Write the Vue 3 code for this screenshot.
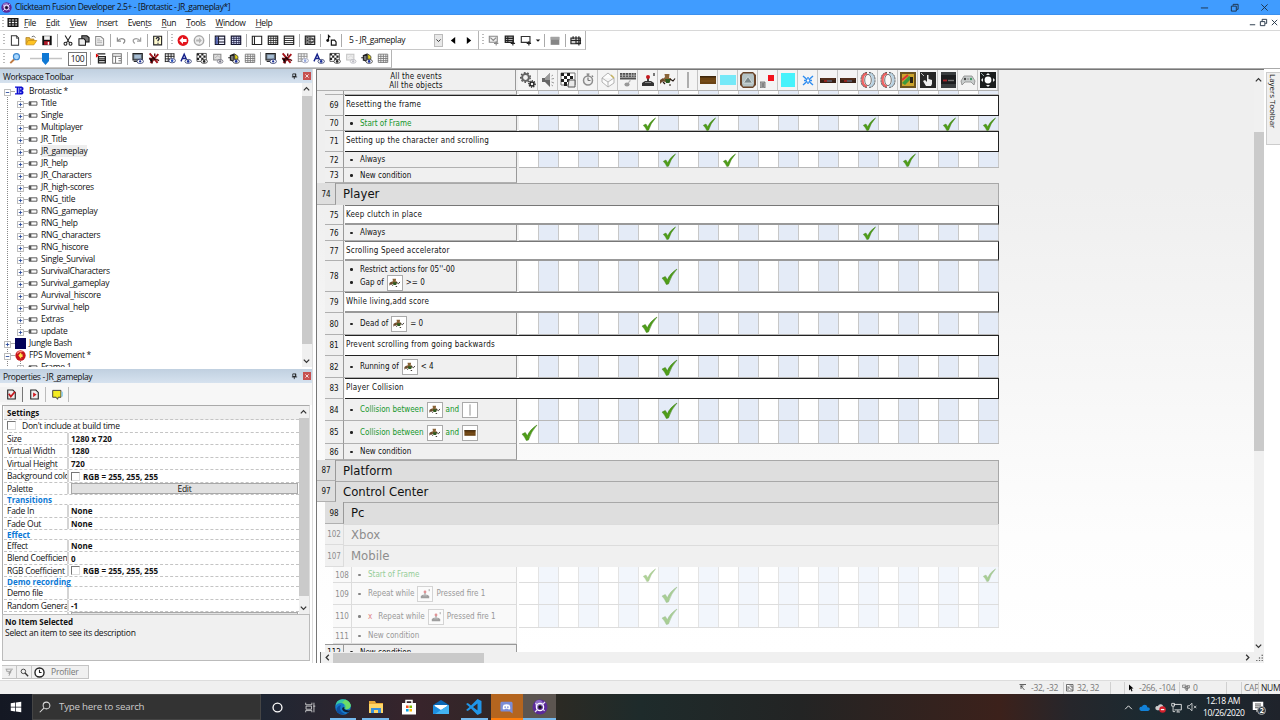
<script setup>
const icons = {
  logo: '<circle cx="8" cy="8" r="7.5" fill="#5b2a9a"/><circle cx="7" cy="5" r="4" fill="#a48ad8" opacity=".7"/><circle cx="8" cy="8" r="3.6" fill="none" stroke="#fff" stroke-width="1.3"/><circle cx="8" cy="8" r="1.8" fill="#111"/><path d="M3 13L6 10M13 3L10 6M12.500 12L11 10M3.500 4L5 6" stroke="#e6dcf6" stroke-width="1.200"/>',
  table: '<path d="M1 2.500H15V13.500H1Z" fill="#fff" stroke="#111" stroke-width="2"/><path d="M1 6H15M1 10H15M5.500 2V14M10.500 2V14" stroke="#111" stroke-width="1.500"/>',
  newf: '<path d="M3 1.500H10L13 4.500V14.500H3Z" fill="#fff" stroke="#333" stroke-width="1.400"/><path d="M10 1.500V5H13" fill="none" stroke="#333"/>',
  open: '<path d="M1 13V4H6L7 6H12V8" fill="#e9b93c" stroke="#a87410"/><path d="M1 14L4 8H16L12 14Z" fill="#ffc423" stroke="#c58a10"/><path d="M9 3Q12 0 14 4" stroke="#333" fill="none"/>',
  save: '<path d="M1.500 1.500H14.500V14.500H1.500Z" fill="#111"/><path d="M4 2H12V7H4Z" fill="#f2f2f2"/><path d="M4 9H12V14H4Z" fill="#b51c2a"/><path d="M9 10H11V14H9Z" fill="#fff"/>',
  cut: '<path d="M4 1L10 11M12 1L6 11" stroke="#222" stroke-width="1.500"/><circle cx="4.500" cy="12.500" r="2" fill="none" stroke="#222" stroke-width="1.500"/><circle cx="11.500" cy="12.500" r="2" fill="none" stroke="#222" stroke-width="1.500"/>',
  copy: '<path d="M5 1.500H12L15 4V10H5Z" fill="#777" stroke="#111" stroke-width="1.400"/><path d="M1 5.500H8L10 8V14.500H1Z" fill="#eee" stroke="#111" stroke-width="1.400"/>',
  paste: '<path d="M2 2.500H9L13 6V14.500H2Z" fill="#f4f4f4" stroke="#8a8a8a" stroke-width="1.400"/><path d="M4 6H8M4 8.500H11M4 11H11" stroke="#999"/>',
  undo: '<path d="M3 4V9H8M3 9Q8 3 13 7Q14 10 11 12" fill="none" stroke="#8d8d8d" stroke-width="1.700"/>',
  redo: '<path d="M13 4V9H8M13 9Q8 3 3 7Q2 10 5 12" fill="none" stroke="#a0a0a0" stroke-width="1.700"/>',
  help: '<path d="M2 2H13V14H2Z" fill="#fffbd0" stroke="#222" stroke-width="1.500"/><path d="M5.500 6Q6 3.500 8.500 4Q11 5 8 8V9M8 11V12.500" fill="none" stroke="#223" stroke-width="1.800"/>',
  back: '<circle cx="8" cy="8" r="7.500" fill="#e3141c"/><path d="M8 3L3 8L8 13V10H13V6H8Z" fill="#fff"/>',
  fwd: '<circle cx="8" cy="8" r="6.500" fill="#f0f0f0" stroke="#a8a8a8" stroke-width="2"/><path d="M8 4L12 8L8 12V9.500H4V6.500H8Z" fill="#b4b4b4"/>',
  story: '<path d="M1.500 2H14.500V13.500H1.500Z" fill="#f0f2ff" stroke="#16162a" stroke-width="1.600"/><path d="M1 6H15M1 10H15M6 2V14" stroke="#16162a" stroke-width="1.400"/><path d="M2 3H5V13H2Z" fill="#5464b0"/>',
  grid: '<path d="M1.500 2H14.500V13.500H1.500Z" fill="#dfe5ff" stroke="#14142c" stroke-width="1.600"/><path d="M1 5H15M1 8H15M1 11H15M5 2V14M8.500 2V14M12 2V14" stroke="#1d1d44" stroke-width="1.100"/>',
  frame: '<path d="M1.500 2H14.500V13.500H1.500Z" fill="#fff" stroke="#222" stroke-width="1.500"/><path d="M4.500 2V14" stroke="#222" stroke-width="1.500"/>',
  gridb: '<path d="M1.500 2H14.500V13.500H1.500Z" fill="#fff" stroke="#222" stroke-width="1.600"/><path d="M1 5H15M1 8H15M1 11H15M5 2V14M8.500 2V14M12 2V14" stroke="#222" stroke-width="1.100"/>',
  lines: '<path d="M1.500 2H14.500V13.500H1.500Z" fill="#fff" stroke="#222" stroke-width="1.600"/><path d="M1 5H15M1 8H15M1 11H15" stroke="#222" stroke-width="1.300"/>',
  data: '<path d="M1.500 2H14.500V13.500H1.500Z" fill="#ddd" stroke="#222" stroke-width="1.600"/><path d="M1 6H15M1 10H15M8 2V14M3 4H6M10 4L13 8M9 12L13 9M3 8H6M3 12H6" stroke="#222" stroke-width="1.300"/>',
  music: '<path d="M4.500 8V1L7 3.500" fill="none" stroke="#111" stroke-width="1.600"/><circle cx="3.500" cy="8" r="2" fill="#111"/><path d="M8.500 7.500H13L15 10V14.500H8.500Z" fill="#fff" stroke="#111" stroke-width="1.600"/>',
  prev: '<path d="M11 3V13L5 8Z" fill="#000"/>',
  next: '<path d="M5 3V13L11 8Z" fill="#000"/>',
  sideg: '<path d="M1.500 2H12.500V10.500H1.500Z" fill="#eee" stroke="#888" stroke-width="1.500"/><path d="M3 4L7 8L11 4M11 9V15M14 12H8" stroke="#888" stroke-width="1.500" fill="none"/>',
  sideb: '<path d="M1.500 2H12.500V10.500H1.500Z" fill="#bbb" stroke="#222" stroke-width="1.800"/><path d="M1 5H13M1 8H13M5 2V11M12 9V15M15 12H9" stroke="#222" stroke-width="1.500"/>',
  framep: '<path d="M1.500 2.500H13.500V10.500H1.500Z" fill="#fff" stroke="#333" stroke-width="1.600"/><path d="M12 9V15M15 12H9" stroke="#222" stroke-width="1.600"/>',
  drop: '<path d="M3 6H13L8 11Z" fill="#111"/>',
  stop: '<path d="M2 3H14V14H2Z" fill="#858585"/><path d="M2 3H14V7H2Z" fill="#a3a3a3"/>',
  event: '<path d="M1 4.500H14V12.500H1Z" fill="#ccc" stroke="#222" stroke-width="1.600"/><path d="M1 8H15M4 2V6M8 2V13M12 2V15M15 12H9" stroke="#222" stroke-width="1.600"/>',
  zoom: '<path d="M7 9L1.500 14.500" stroke="#c07a42" stroke-width="2.600"/><circle cx="10" cy="5.500" r="4.200" fill="#a8d8ff" stroke="#3b86d0" stroke-width="1.600"/>',
  ins: '<path d="M3 1.500H14M4.500 5.500H14V14H4.500ZM5 8.500H14M5 11H14" fill="none" stroke="#222" stroke-width="1.800"/><path d="M1 1V7L5 4Z" fill="#d00"/>',
  insg: '<path d="M2 1.500H14V14.500H2ZM2 5H14M6 5V14M10 8H14M10 11H14" fill="none" stroke="#777" stroke-width="1.400"/>',
  mon: '<path d="M1 1H14V10H1Z" fill="#6c7884" stroke="#222" stroke-width="1.400"/><path d="M3 3H12V8H3Z" fill="#a6bdd3"/><path d="M2 12H7" stroke="#222" stroke-width="1.600"/><ellipse cx="11" cy="12" rx="4.500" ry="3" fill="#fff" stroke="#14205a"/><circle cx="11" cy="12" r="1.600" fill="#1a2f9a"/>',
  redx: '<path d="M2 1L13 14M14 2L3 14" stroke="#a5141a" stroke-width="2.600"/><path d="M1 8H7L5 15M11 9L15 11M9 1V5" stroke="#5c0d12" stroke-width="2"/><path d="M6 6L10 10" stroke="#220508" stroke-width="2.400"/>',
  eyeg: '<path d="M1 1.500H14M1 5H14M1 8.500H8M1 12H6M1.500 1V13M5.500 1V13M9.500 1V8M13.500 1V8" stroke="#222" stroke-width="1.300"/><ellipse cx="11" cy="11" rx="4.500" ry="3" fill="#fff" stroke="#14205a"/><circle cx="11" cy="11" r="1.800" fill="#2a52c0"/>',
  aeye: '<path d="M1 12L5.500 2L9 10M3 8H8" stroke="#14208a" stroke-width="1.900" fill="none"/><ellipse cx="11" cy="12" rx="4.500" ry="2.800" fill="#fff" stroke="#14205a"/><circle cx="11" cy="12" r="1.800" fill="#1a2f9a"/>',
  cheye: '<path d="M1 1H14V12H1Z" fill="#fff" stroke="#222"/><path d="M1 1H4V4H1ZM7 1H10V4H7ZM4 4H7V7H4ZM10 4H13V7H10ZM1 7H4V10H1ZM7 7H10V10H7Z" fill="#222"/><ellipse cx="11" cy="12" rx="4.500" ry="2.800" fill="#fff" stroke="#222"/><circle cx="11" cy="12" r="1.800" fill="#222"/>',
  geye: '<path d="M2 2H12V10H2Z" fill="#ddd" stroke="#888" stroke-width="1.400"/><path d="M4 7L8 4L11 7" stroke="#aaa" fill="none"/><ellipse cx="11" cy="12" rx="4" ry="2.600" fill="#eee" stroke="#667"/><circle cx="11" cy="12" r="1.600" fill="#778"/>',
  yeye: '<path d="M0 7H3M3 3V11M3 4L8 2V12L3 10" fill="#777" stroke="#222" stroke-width="1.600"/><path d="M9 2Q15 4 13 9H9Z" fill="#e2d31a" stroke="#222"/><ellipse cx="11" cy="12" rx="4.500" ry="2.800" fill="#fff" stroke="#222"/><circle cx="11" cy="12" r="1.800" fill="#1a2f9a"/>',
  gridg: '<path d="M1.500 2H14.500V13.500H1.500ZM1 5H15M1 8H15M1 11H15M5 2V14M8.500 2V14M12 2V14" fill="none" stroke="#777" stroke-width="1.200"/>',
  gear: '<circle cx="5.500" cy="5.500" r="3.400" fill="none" stroke="#666" stroke-width="2"/><circle cx="5.500" cy="5.500" r="4.800" fill="none" stroke="#555" stroke-width="1.400" stroke-dasharray="1.700 1.700"/><circle cx="12" cy="12" r="2" fill="none" stroke="#222" stroke-width="1.500"/><circle cx="12" cy="12" r="3.200" fill="none" stroke="#222" stroke-width="1.200" stroke-dasharray="1.200 1.200"/>',
  speaker: '<path d="M2 6H5L10 1V15L5 10H2Z" fill="#666"/><path d="M5 6L10 1V8H5Z" fill="#9a9a9a"/><path d="M11.500 4L13 3M11.500 7L14 6.500M11.500 10L14 11M11.500 13L13 14" stroke="#999" stroke-width="1"/>',
  checker: '<path d="M1 1H15V13H1Z" fill="#fff" stroke="#777"/><path d="M1 1H4V4H1ZM7 1H10V4H7ZM4 4H7V7H4ZM10 4H13V7H10ZM1 7H4V10H1ZM7 7H10V10H7ZM4 10H7V14H4Z" fill="#222"/><path d="M9 8H15V15H8Z" fill="#e9e9e9" stroke="#555"/>',
  clock: '<circle cx="8" cy="8.500" r="4.500" fill="#eee" stroke="#8c8c8c" stroke-width="1.500"/><path d="M8 8.500V5.500M8 8.500H10.500M6.500 2H9.500M8 2V4M12 3.500L13 5" stroke="#777" stroke-width="1.200"/>',
  cube: '<path d="M8 1L14 6V11L8 15L2 10V6ZM2 6L8 10L14 6M8 10V15" fill="#fcfcfc" stroke="#aaa" stroke-width=".9"/><path d="M11 3L14 6" stroke="#c5b360" stroke-width="1.500"/>',
  keys: '<path d="M0 1H16V7.500H0Z" fill="#505050"/><path d="M0 3.200H16M0 5.400H16M2.500 1V5M5.500 1V5M8.500 1V5M11.500 1V5M14 1V5" stroke="#c8c8c8" stroke-width=".7"/><ellipse cx="7" cy="12.500" rx="2.600" ry="2" fill="#999"/><path d="M8 10.500Q11 10 10 7.500" stroke="#aaa" fill="none"/>',
  joy: '<path d="M2 14V11L5 9H11L14 11V14Z" fill="#333"/><path d="M8 9V5" stroke="#444" stroke-width="2"/><circle cx="8" cy="5" r="2" fill="#c51a20"/><path d="M5 10.500H11" stroke="#8a8a8a"/><path d="M14 1V4" stroke="#222" stroke-width="1.200"/>',
  player: '<path d="M4.500 2H9.500L9 6H11L10 10H4.500L3 7L5 5Z" fill="#8a6438"/><path d="M0 8L3 6L5 9L2 10L0 12Z" fill="#6d4a2c"/><path d="M5 7H10.500L9.500 11H6Z" fill="#2c5a20"/><path d="M10 7L13 9L15 6.500M3 10L5 12M9 13H11" fill="none" stroke="#241a14" stroke-width="1.200"/>',
  line: '<path d="M8 0V16" stroke="#888" stroke-width="1.300"/>',
  wood: '<path d="M0 4H16V12H0Z" fill="#6b4314"/><path d="M0 4H16V5.500H0Z" fill="#3e260b"/><path d="M1 9H15" stroke="#80551c"/>',
  sky: '<path d="M0 3H16V13H0Z" fill="#76e9f8"/>',
  up: '<path d="M3 0H13L16 3V13L13 16H3L0 13V3Z" fill="#6a4429"/><path d="M3 1.500H13L14 4V12L13 14.500H3L2 12V4Z" fill="#b4c2c4"/><path d="M8 4.500L12.500 11H3.500Z" fill="#7b898c" stroke="#e6ecec" stroke-width=".7"/>',
  red: '<path d="M8 3H14V9H8Z" fill="#f3131d"/><path d="M0 10H5V16H0Z" fill="#bbb" stroke="#666" stroke-width=".8"/><path d="M1.500 12H4M1.500 14H4" stroke="#333" stroke-width=".8"/>',
  cyan: '<path d="M1 1H15V15H1Z" fill="#46f2fb"/>',
  star: '<path d="M3 4L13 13M13 4L3 13M8 5V12M4 8.500H12" stroke="#2d8cf0" stroke-width="1.400"/><circle cx="8" cy="8.500" r="1.200" fill="#fff"/>',
  bar: '<path d="M0 6H16V11H0Z" fill="#3a2218"/><path d="M1 7H15" stroke="#7a4527" stroke-width=".8"/><path d="M4 9H7" stroke="#d02a2a" stroke-width="1.200"/><path d="M7 9H12" stroke="#6c7a94" stroke-width="1.200"/>',
  ring: '<path d="M7 1.500Q2.500 2 2.500 8T7 14.500" fill="none" stroke="#f06464" stroke-width="2.400"/><path d="M9 1.500Q13.500 2 13.500 8T9 14.500" fill="none" stroke="#b9d2e2" stroke-width="2.400"/><path d="M7 .5Q1 1 1 8T7 15.500M9 .5Q15 1 15 8T9 15.500" fill="none" stroke="#444" stroke-width=".9" stroke-dasharray="2 .7"/><ellipse cx="8" cy="8" rx="3.300" ry="5.600" fill="#f8f8f8" stroke="#555" stroke-width=".8"/>',
  mixed: '<path d="M0 0H16V16H0Z" fill="#6c5420"/><path d="M2 2H14V14H2Z" fill="#cda52b"/><path d="M2 11L9 4L12 6L5 13Z" fill="#3d9a3d"/><path d="M2 8L8 3" stroke="#d33" stroke-width="2"/><path d="M10 5H13V11H10Z" fill="#2a2412"/>',
  hand: '<path d="M0 0H16V16H0Z" fill="#262626"/><path d="M6 14L3 9L5 8L7 10V3H8.500V7L12 8V12L11 14Z" fill="#eee"/><path d="M1 1L4 4" stroke="#bbb"/>',
  dark: '<path d="M1 0H16V16H1Z" fill="#3a3d3f"/><path d="M1 3H16V12H1Z" fill="#1c1d1f"/><path d="M3 8.500H7" stroke="#a8252b" stroke-width="1.800"/><path d="M8 8.500H14" stroke="#777" stroke-width="1.400"/>',
  pad: '<path d="M4 4H12L15 9L14 13L11 10H5L2 13L1 9Z" fill="#c9cdcd" stroke="#888" stroke-width=".8"/><circle cx="5" cy="7" r="1.200" fill="#444"/><circle cx="11" cy="7" r="1.200" fill="#496"/><path d="M7 7H9" stroke="#888"/>',
  move: '<path d="M0 0H16V16H0Z" fill="#1b1d1d"/><circle cx="8" cy="8" r="3.400" fill="#fff"/><path d="M8 1L10 3H6ZM8 15L10 13H6ZM1 8L3 6V10ZM15 8L13 6V10Z" fill="#eee"/><path d="M1 1L4 4" stroke="#9aa"/>',
  check: '<path d="M1.500 9.500L4.500 8L6.500 11Q9 5 15.500 1Q10 7 7.500 15L5.500 15.500Q4 12 1.500 9.500Z" fill="#4f9e18" stroke="#3a7d14" stroke-width=".5"/>',
  win: '<path d="M1 3L7 2V7.500H1ZM8 1.900L15 1V7.500H8ZM1 8.500H7V14L1 13ZM8 8.500H15V15L8 14Z" fill="#fff"/>',
  search: '<circle cx="10" cy="6" r="4.500" fill="none" stroke="#ddd" stroke-width="1.400"/><path d="M6.500 9.500L1 15" stroke="#ddd" stroke-width="1.400"/>',
  mag: '<circle cx="6" cy="6" r="4" fill="none" stroke="#444" stroke-width="1.700"/><path d="M9 9L14.500 14.500" stroke="#333" stroke-width="2.400"/>',
  circle: '<circle cx="8" cy="8" r="6.500" fill="none" stroke="#fff" stroke-width="1.900"/>',
  tasks: '<path d="M1 1V4H10V1M1.500 6H9.500V10.500H1.500ZM1 15V12.500H10V15M13 1V15M12 6H15" fill="none" stroke="#ddd" stroke-width="1.200"/>',
  edge: '<circle cx="8" cy="8" r="7.800" fill="#1679c9"/><path d="M.5 7Q1 1 7 .3Q14 0 15.700 6Q16 10 11 10.500Q8 10 9.500 8Q10 4 6 4Q2 4 .5 7Z" fill="#39c9a0"/><path d="M10 .8Q16 3 15.700 7Q14 11 10.500 10Q12 5 7 4Z" fill="#6edc66"/><path d="M6 6Q3 12 10 15Q5 16.500 2 13Q0 8 6 6Z" fill="#0d4fa0"/><path d="M9.500 8Q8 11 14 11.500Q15 11 15.500 10Q15 13 13 13.500Q8 13 7 10Q7 8 9.500 8Z" fill="#101e33"/>',
  folder: '<path d="M1 2H7L8 4H15V14H1Z" fill="#e8a93a"/><path d="M1 5H15V14H1Z" fill="#ffd668"/><path d="M3 14V9H13V14H10V11H6V14Z" fill="#3990dc"/>',
  store: '<path d="M5 5V1.500H11V5" fill="none" stroke="#fff" stroke-width="1.500"/><path d="M1 4H15V15.500H1Z" fill="#fff"/><path d="M5 6.500H7.600V9H5Z" fill="#f25022"/><path d="M8.400 6.500H11V9H8.400Z" fill="#7fba00"/><path d="M5 10H7.600V12.500H5Z" fill="#00a4ef"/><path d="M8.400 10H11V12.500H8.400Z" fill="#ffb900"/>',
  mail: '<path d="M0 6L8 1L16 6V15H0Z" fill="#0b67b5"/><path d="M1.500 6H14.500V12H1.500Z" fill="#fff"/><path d="M0 6L8 11L16 6V15H0Z" fill="#1d8ee0"/><path d="M8 11L16 6V15H2Z" fill="#43b3f3"/>',
  code: '<path d="M11.500 0L15.500 2V14L11.500 16L5 9.500L1.800 12L0 11L3.500 8L0 5L1.800 4L5 6.500ZM11.500 4.500L7 8L11.500 11.500Z" fill="#2196e8" fill-rule="evenodd"/>',
  discord: '<path d="M2 1H14Q15.500 1 15.500 3V15.500L12 13H2Q.5 13 .5 11V3Q.5 1 2 1Z" fill="#7b8cd6"/><path d="M4.500 4.500Q8 3.400 11.500 4.500Q13 7 12.500 10L10.500 10.500L10 9.500H6L5.500 10.500L3.500 10Q3 7 4.500 4.500Z" fill="#fff"/><circle cx="6.300" cy="7.600" r="1" fill="#7b8cd6"/><circle cx="9.700" cy="7.600" r="1" fill="#7b8cd6"/>',
  chevup: '<path d="M2 11L8 5L14 11" fill="none" stroke="#eee" stroke-width="1.700"/>',
  cloud: '<path d="M3 13Q0 12 .5 9Q1.500 6.500 4 7Q6 3 10 4.500Q12 5.500 12 7.500Q16 7.500 15.700 11Q15 13 13 13Z" fill="#1282d8"/>',
  sync: '<path d="M3 12Q0 11 .5 8Q1.500 5.500 4 6Q6 2 10 3.500Q12 4.500 12 7Q15 7 15 12Z" fill="#ccc"/><circle cx="11" cy="11" r="4.700" fill="#d31f2b"/><path d="M8.500 11H13.500" stroke="#fff" stroke-width="1.800"/>',
  net: '<path d="M4 3.500H15V11.500H5M8 14.500H13M10 12V14" fill="none" stroke="#eee" stroke-width="1.300"/><path d="M1 2H5V6H1ZM3 6V14H6" fill="none" stroke="#eee" stroke-width="1.200"/>',
  mute: '<path d="M1 6H3.500L8 2V14L3.500 10H1ZM11 6L15 10M15 6L11 10" fill="none" stroke="#eee" stroke-width="1.200"/>',
  note: '<path d="M1 1H15V12H9L6 15V12H1Z" fill="#fff"/><path d="M4 4H12M4 6.500H12M4 9H9" stroke="#222" stroke-width="1"/>',
  arrowc: '<path d="M3 4H9M4 3V10M4 4L11 12M1 1H14" stroke="#333" stroke-width="1.500" fill="none"/>',
  sizec: '<path d="M1 1H14V14H1Z" fill="#fff" stroke="#444" stroke-width="1.500"/><path d="M4 12V5L11 12H14M7 4H12V9" fill="none" stroke="#444" stroke-width="1.500"/>',
  pointer: '<path d="M4 1V13L7 10L9 15L11 14L9 9H13Z" fill="#000"/>',
  objs: '<path d="M1 2H8V7H1ZM6 5H12V10H6ZM10 3H15V8H10ZM8 9H11V13H8Z" fill="#ddd" stroke="#666" stroke-width="1.200"/>',
  pin: '<path d="M4 2H11V8H4ZM2 9H14M7.500 9V14M10 2V8" fill="none" stroke="#111" stroke-width="1.700"/>',
  brot: '<path d="M0 1H12L15 3V6L13 8L15 10V13L13 15H0V13H3V3H0Z" fill="#0b0bd0"/><path d="M6 3H7.500V13H6ZM9 4H11.500V6H9ZM9 10H11.500V12H9Z" fill="#d5dcff"/>',
  navy: '<path d="M0 0H16V16H0Z" fill="#020258"/>',
  fps: '<circle cx="8" cy="8" r="7.500" fill="#c8151b"/><path d="M9 3L5 8L9 13V10H11V6H9Z" fill="#ffe14a"/><path d="M3 5Q6 1 11 2" stroke="#ff9a8a" fill="none" stroke-width="1.500"/>',
  scene: '<path d="M1 5H15V11H1Z" fill="#fff" stroke="#333" stroke-width="1.400"/><path d="M1 5H5V11H1Z" fill="#555"/>',
  doc: '<path d="M2.500 1.500H10L13.500 5V14.500H2.500Z" fill="#eee" stroke="#222" stroke-width="1.600"/><path d="M4 7L7 11L13 4" fill="none" stroke="#c4161c" stroke-width="2.400"/>',
  docplay: '<path d="M2.500 1.500H10L13.500 5V14.500H2.500Z" fill="#eee" stroke="#222" stroke-width="1.600"/><path d="M6 5L11 8L6 12Z" fill="#d01a20"/>',
  note2: '<path d="M1 2H13V12H9L8 15L6 12H1Z" fill="#f4ec22" stroke="#333" stroke-width="1.300"/><path d="M15 4V11" stroke="#8fd4f0" stroke-width="2"/>',
  clockt: '<circle cx="8" cy="8" r="6.600" fill="#fff" stroke="#222" stroke-width="2"/><path d="M8 4V8H11" fill="none" stroke="#222" stroke-width="1.600"/>',
  flag: '<path d="M1 2H14M3 2V6H8V10M10 4V9M5 9H9L7 14M12 3L9 8" fill="none" stroke="#999" stroke-width="1.500"/>',
}
const menus = [['F', 'ile'], ['E', 'dit'], ['V', 'iew'], ['I', 'nsert'], ['', 'Even', 't', 's'], ['R', 'un'], ['T', 'ools'], ['W', 'indow'], ['H', 'elp']]
const tb1 = ['newf', 'open', 'save', '|', 'cut', 'copy', 'paste', '|', 'undo', 'redo', '|', 'help']
const tb2 = ['back', 'fwd', '|', 'story', 'grid', '|', 'frame', 'gridb', 'lines', '|', 'data', '|', 'music', '|']
const tb3 = ['sideg', 'sideb', 'framep', 'drop', '|', 'stop', '|', 'event']
const views = ['mon', 'redx', 'eyeg', 'aeye', 'cheye', 'geye', 'yeye', 'gridg']
const tb4 = ['ins', 'insg', '|', ...views, '|', ...views]
const scenes = ['Title', 'Single', 'Multiplayer', 'JR_Title', 'JR_gameplay', 'JR_help', 'JR_Characters', 'JR_high-scores', 'RNG_title', 'RNG_gameplay', 'RNG_help', 'RNG_characters', 'RNG_hiscore', 'Single_Survival', 'SurvivalCharacters', 'Survival_gameplay', 'Aurvival_hiscore', 'Survival_help', 'Extras', 'update']
const tree = [
  { t: 'Brotastic *', i: 'brot', root: 1, s: '−' },
  ...scenes.map(t => ({ t, i: 'scene', s: '+' })),
  { t: 'Jungle Bash', i: 'navy', root: 1, s: '+' },
  { t: 'FPS Movement *', i: 'fps', root: 1, s: '−' },
  { t: 'Frame 1', i: 'scene', s: '+', last: 1 },
]
const props = [
  ['Size', '1280 x 720'], ['Virtual Width', '1280'], ['Virtual Height', '720'], ['Background color', 'RGB = 255, 255, 255', 'c'], ['Palette', 'Edit', 'b'],
  ['Transitions', null], ['Fade In', 'None'], ['Fade Out', 'None'], ['Effect', null], ['Effect', 'None'], ['Blend Coefficient', '0'], ['RGB Coefficient', 'RGB = 255, 255, 255', 'c'],
  ['Demo recording', null], ['Demo file', ''], ['Random Generator', '-1'], ['', ' ', 'b'],
]
const objects = ['gear', 'speaker', 'checker', 'clock', 'cube', 'keys', 'joy', 'player', 'line', 'wood', 'sky', 'up', 'red', 'cyan', 'star', 'bar', 'bar', 'ring', 'ring', 'mixed', 'hand', 'dark', 'pad', 'move']
const P = { i: 'player' }
const J = { i: 'joy' }
const NEW = [['New condition']]
const rows = [
  { n: 69, k: 'c', h: 21, t: 'Resetting the frame' },
  { n: 70, h: 15, g: 1, l: [['Start of Frame']], c: [6, 9, 17, 21, 23] },
  { n: 71, k: 'c', h: 21, t: 'Setting up the character and scrolling' },
  { n: 72, h: 16, l: [['Always']], c: [7, 10, 19] },
  { n: 73, h: 15, l: NEW },
  { n: 74, k: 'g', h: 22, t: 'Player', d: 0 },
  { n: 75, k: 'c', s: 1, h: 20, t: 'Keep clutch in place' },
  { n: 76, h: 16, l: [['Always']], c: [7, 17] },
  { n: 77, k: 'c', s: 1, h: 20, t: 'Scrolling Speed accelerator' },
  { n: 78, h: 31, l: [["Restrict actions for 05''-00"], ['Gap of', P, '>= 0']], c: [7] },
  { n: 79, k: 'c', s: 1, h: 21, t: 'While living,add score' },
  { n: 80, h: 22, l: [['Dead of', P, '= 0']], c: [6] },
  { n: 81, k: 'c', h: 21, t: 'Prevent scrolling from going backwards' },
  { n: 82, h: 22, l: [['Running of', P, '< 4']], c: [7] },
  { n: 83, k: 'c', h: 21, t: 'Player Collision' },
  { n: 84, h: 22, g: 1, l: [['Collision between', P, 'and', { i: 'line' }]], c: [7] },
  { n: 85, h: 23, g: 1, l: [['Collision between', P, 'and', { i: 'wood' }]], c: [0] },
  { n: 86, h: 16, l: NEW },
  { n: 87, k: 'g', h: 21, t: 'Platform', d: 0 },
  { n: 97, k: 'g', h: 21, t: 'Control Center', d: 0 },
  { n: 98, k: 'g', h: 22, t: 'Pc', d: 1 },
  { n: 102, k: 'g', h: 21, t: 'Xbox', d: 1, off: 1 },
  { n: 107, k: 'g', h: 22, t: 'Mobile', d: 1, off: 1 },
  { n: 108, h: 16, g: 1, d: 2, off: 1, l: [['Start of Frame']], c: [6, 23] },
  { n: 109, h: 22, d: 2, off: 1, l: [['Repeat while', J, 'Pressed fire 1']], c: [7] },
  { n: 110, h: 23, d: 2, off: 1, l: [['✗', 'Repeat while', J, 'Pressed fire 1']], c: [7] },
  { n: 111, h: 16, d: 2, off: 1, l: NEW },
  { n: 112, h: 16, l: NEW, last: 1 },
]
const apps = [['circle', ''], ['tasks', ''], ['edge', 'on'], ['folder', 'on'], ['store', ''], ['mail', ''], ['code', 'on'], ['discord', 'alert'], ['logo', 'act']]
</script>

<template>
  <div class="win">
    <header class="title">
      <svg viewBox="0 0 16 16" v-html="icons.logo" />
      <span>Clickteam Fusion Developer 2.5+ - [Brotastic - JR_gameplay*]</span>
      <div class="caps">
        <svg viewBox="0 0 10 10"><path d="M1 5.500H9" /></svg>
        <svg viewBox="0 0 10 10"><path d="M1.500 3.500H7V9H1.500ZM3.500 3V1.500H9V7H7.500" /></svg>
        <svg viewBox="0 0 10 10"><path d="M1.500 1.500L8.500 8.500M8.500 1.500L1.500 8.500" /></svg>
      </div>
    </header>

    <nav class="menu">
      <i class="grip" />
      <svg viewBox="0 0 16 16" v-html="icons.table" />
      <span v-for="m in menus" :key="m[1]"><template v-if="m[2]">{{ m[1] }}<u>{{ m[2] }}</u>{{ m[3] }}</template><template v-else><u>{{ m[0] }}</u>{{ m[1] }}</template></span>
      <div class="mdi">
        <svg viewBox="0 0 10 10"><path d="M2 7.500H8" /></svg>
        <svg viewBox="0 0 10 10"><path d="M1.500 4H6.500V8.500H1.500ZM3.500 3.500V1.500H8.500V6H7" /></svg>
        <svg viewBox="0 0 10 10"><path d="M2 2L8 8M8 2L2 8" /></svg>
      </div>
    </nav>

    <div class="bars">
      <div class="bar b1">
        <i class="grip" />
        <template v-for="(t, i) in tb1" :key="i"><i v-if="t === '|'" class="sep" /><svg v-else class="ti" viewBox="-1 -1 18 18" v-html="icons[t]" /></template>
      </div>
      <div class="bar b2">
        <i class="grip" />
        <template v-for="(t, i) in tb2" :key="i"><i v-if="t === '|'" class="sep" /><svg v-else class="ti" viewBox="-1 -1 18 18" v-html="icons[t]" /></template>
        <div class="combo"><span>5 - JR_gameplay</span><b><svg viewBox="0 0 10 10"><path d="M2 3.500L5 6.500L8 3.500" /></svg></b></div>
        <svg class="ti" viewBox="-1 -1 18 18" v-html="icons.prev" />
        <svg class="ti" viewBox="-1 -1 18 18" v-html="icons.next" />
      </div>
      <div class="bar b3">
        <i class="grip" />
        <template v-for="(t, i) in tb3" :key="i"><i v-if="t === '|'" class="sep" /><svg v-else class="ti" :class="{ half: t === 'drop' }" viewBox="-1 -1 18 18" v-html="icons[t]" /></template>
      </div>
    </div>
    <div class="bars second">
      <div class="bar b4">
        <i class="grip" />
        <svg class="ti" viewBox="-1 -1 18 18" v-html="icons.zoom" />
        <svg class="slider" viewBox="0 0 32 14"><path d="M0 6.500H32" stroke="#c4c4c4" stroke-width="1.500" /><path d="M12 1H19V9L15.500 13L12 9Z" fill="#0f78d4" /></svg>
        <div class="pct">100</div><i class="sep" />
        <template v-for="(t, i) in tb4" :key="i"><i v-if="t === '|'" class="sep" /><svg v-else class="ti" :class="{ dim: i > 11 && (t === 'eyeg' || t === 'geye') }" viewBox="-1 -1 18 18" v-html="icons[t]" /></template>
      </div>
    </div>

    <main class="body">
      <aside class="left">
        <div class="phead"><span>Workspace Toolbar</span><svg viewBox="0 0 16 16" v-html="icons.pin" /><b><svg viewBox="0 0 10 10"><path d="M3 3L7 7M7 3L3 7" /></svg></b></div>
        <div class="treebox">
          <div class="tree">
            <div v-for="(r, i) in tree" :key="i" class="tr" :class="{ root: r.root, first: i === 0 }">
              <i class="stem" :class="{ hide: i === 0 }" />
              <i v-if="!r.root" class="stem two" />
              <svg class="pm" viewBox="0 0 8 8"><path d="M.5.5H7.500V7.500H.5Z" fill="#fff" stroke="#999" stroke-width=".8" /><path :d="r.s === '+' ? 'M2 4H6M4 2V6' : 'M2 4H6'" stroke="#2a4a9a" /></svg>
              <i class="dash" />
              <svg class="ni" viewBox="0 0 16 16" v-html="icons[r.i]" />
              <span :class="{ sel: r.t === 'JR_gameplay' }">{{ r.t }}</span>
            </div>
          </div>
          <div class="vs tv"><svg viewBox="0 0 10 10"><path d="M2 6.500L5 3.500L8 6.500" /></svg><div /><svg viewBox="0 0 10 10"><path d="M2 3.500L5 6.500L8 3.500" /></svg></div>
        </div>
        <div class="phead p2"><span>Properties - JR_gameplay</span><svg viewBox="0 0 16 16" v-html="icons.pin" /><b><svg viewBox="0 0 10 10"><path d="M3 3L7 7M7 3L3 7" /></svg></b></div>
        <div class="ptabs">
          <div class="act"><svg viewBox="0 0 16 16" v-html="icons.doc" /></div>
          <div><svg viewBox="0 0 16 16" v-html="icons.docplay" /></div>
          <div><svg viewBox="0 0 16 16" v-html="icons.note2" /></div>
        </div>
        <div class="pbox">
          <div class="plist">
            <div class="ph">Settings</div>
            <div class="pchk"><i />Don't include at build time</div>
            <template v-for="(p, i) in props" :key="i">
              <div v-if="p[1] === null" class="psec">{{ p[0] }}</div>
              <div v-else class="pr"><span>{{ p[0] }}</span><b><em v-if="p[2] === 'b'" class="btn">{{ p[1] }}</em><template v-else><i v-if="p[2] === 'c'" />{{ p[1] }}</template></b></div>
            </template>
          </div>
          <div class="vs pv"><svg viewBox="0 0 10 10"><path d="M2 6.500L5 3.500L8 6.500" /></svg><div /><svg viewBox="0 0 10 10"><path d="M2 3.500L5 6.500L8 3.500" /></svg></div>
        </div>
        <div class="desc"><b>No Item Selected</b><span>Select an item to see its description</span></div>
      </aside>

      <section class="ed">
        <div class="edrow">
          <div class="sheet">
            <div class="ohead">
              <div class="all"><span>All the events</span><span>All the objects</span></div>
              <div class="objs"><div v-for="(o, i) in objects" :key="i"><svg viewBox="0 0 16 16" v-html="icons[o]" /></div></div>
            </div>
            <div class="er strip"><div class="num" /><div class="cond" /><div class="cells" /></div>
            <div v-for="r in rows" :key="r.n" class="er" :class="[r.k === 'g' ? 'grp' : r.k === 'c' ? 'com' : 'ev', 'd' + (r.d ?? 1), { off: r.off, green: r.g, tall: r.h > 20, soft: r.s, last: r.last }]" :style="{ height: r.h + 'px' }">
              <div class="num">{{ r.n }}</div>
              <div v-if="r.k" class="txt">{{ r.t }}</div>
              <template v-else>
                <div class="cond">
                  <div v-for="(l, j) in r.l" :key="j" class="ln">
                    <i class="dot" />
                    <template v-for="(w, k) in l" :key="k"><svg v-if="w.i" class="oi" viewBox="-2 -2 20 20" v-html="icons[w.i]" /><span v-else :class="{ neg: w === '✗' }">{{ w === '✗' ? 'x' : w }}</span></template>
                  </div>
                </div>
                <div v-if="r.c" class="cells"><div v-for="n in 24" :key="n"><svg v-if="r.c.includes(n - 1)" viewBox="0 0 16 16" v-html="icons.check" /></div></div>
              </template>
            </div>
          </div>
          <div class="vs ev-vs"><svg viewBox="0 0 10 10"><path d="M2 6.500L5 3.500L8 6.500" /></svg><div /><svg viewBox="0 0 10 10"><path d="M2 3.500L5 6.500L8 3.500" /></svg></div>
        </div>
        <div class="hs"><i class="split" /><svg viewBox="0 0 10 10"><path d="M6.500 2L3.500 5L6.500 8" /></svg><div /><svg viewBox="0 0 10 10"><path d="M3.500 2L6.500 5L3.500 8" /></svg><svg class="size" viewBox="0 0 10 10"><path d="M8 2V3M8 5V6M8 8V9M5 5V6M5 8V9M2 8V9" /></svg></div>
      </section>

      <div class="rdock"><span>Layers Toolbar</span></div>
    </main>

    <div class="tabs">
      <div><svg viewBox="0 0 16 16" v-html="icons.flag" /></div>
      <div><svg viewBox="0 0 16 16" v-html="icons.mag" /></div>
      <div class="w"><svg viewBox="0 0 16 16" v-html="icons.clockt" />Profiler</div>
    </div>

    <footer class="status">
      <div class="s1"><svg viewBox="0 0 16 16" v-html="icons.arrowc" />-32, -32</div>
      <div class="s2"><svg viewBox="0 0 16 16" v-html="icons.sizec" />32, 32</div>
      <div class="s3" />
      <div class="s4"><svg viewBox="0 0 16 16" v-html="icons.pointer" />-266, -104</div>
      <div class="s5"><svg viewBox="0 0 16 16" v-html="icons.objs" />0</div>
      <div class="s6" />
      <div class="s7">CAP</div>
      <div class="s8">NUM</div>
    </footer>

    <div class="task">
      <div class="start"><svg viewBox="0 0 16 16" v-html="icons.win" /></div>
      <div class="find"><svg viewBox="0 0 16 16" v-html="icons.search" />Type here to search</div>
      <div v-for="a in apps" :key="a[0]" class="app" :class="[a[1], 'a-' + a[0]]"><svg viewBox="0 0 16 16" v-html="icons[a[0]]" /></div>
      <div class="tray">
        <svg v-for="t in ['chevup', 'cloud', 'sync', 'net', 'mute']" :key="t" :class="t" viewBox="0 0 16 16" v-html="icons[t]" />
        <div class="time"><span>12:18 AM</span><span>10/26/2020</span></div>
        <div class="ntf"><svg viewBox="0 0 16 16" v-html="icons.note" /><b>2</b></div>
      </div>
    </div>
  </div>
</template>

<style>
html, body { overflow: hidden; background: #fff; }
</style>

<style scoped>
* { box-sizing: border-box; }
i, em { font-style: normal; }
svg { flex: none; display: block; }
.win { width: 1280px; height: 720px; display: flex; flex-direction: column; background: #fff; font: 8.500px/12px "Open Sans", "Noto Sans", sans-serif; letter-spacing: -.36px; color: #111; white-space: nowrap; overflow: hidden; }
.title { height: 15px; flex: none; display: flex; align-items: center; background: #409cff; padding-left: 1px; border-bottom: 1px solid #3b90ee; letter-spacing: -.38px; }
.title > svg { width: 11px; height: 11px; margin-right: 3px; }
.caps { margin-left: auto; display: flex; gap: 21px; padding-right: 11px; }
.caps svg { width: 9px; height: 9px; }
.caps path, .mdi path { fill: none; stroke: #1c2c40; stroke-width: 1; }
.menu { height: 16px; flex: none; display: flex; align-items: center; padding-left: 2px; border-bottom: 1px solid #d8d8d8; }
.menu > svg { width: 12px; height: 11px; margin: 0 5px 0 1px; }
.menu > span { margin-right: 10px; }
.menu u { text-underline-offset: 1px; text-decoration-thickness: 1px; text-decoration-color: #777; }
.mdi { margin-left: auto; display: flex; gap: 2px; padding-right: 1px; }
.mdi svg { width: 9px; height: 9px; }
.grip { width: 2px; height: 12px; margin: 0 2px 0 0; background: repeating-linear-gradient(#bbb 0 1px, #fff 1px 3px); flex: none; }
.bars { height: 19px; flex: none; display: flex; }
.second { height: 19px; border-bottom: 1px solid #aaa; padding-bottom: 0; }
.bar { display: flex; align-items: center; border-right: 1px solid #b4b4b4; border-bottom: 1px solid #c8c8c8; padding-left: 3px; }
.b1 { width: 168px; }
.b2 { width: 311px; }
.b3 { width: 107px; }
.b4 { width: 392px; }
.ti { width: 16px; height: 13px; }
.half { width: 8px; height: 9px; }
.dim { opacity: .5; }
.sep { width: 5px; height: 13px; flex: none; background: linear-gradient(90deg, transparent 2px, #aaa 2px 3px, transparent 3px); }
.combo { width: 101px; display: flex; align-items: center; justify-content: space-between; padding: 0 2px 0 5px; }
.combo b { width: 9px; height: 13px; border: 1px solid #bbb; background: #e8e8e8; display: flex; align-items: center; }
.combo svg { width: 7px; height: 7px; }
.combo path, .vs path, .hs path { fill: none; stroke: #333; stroke-width: 1.400; }
.slider { width: 32px; height: 14px; margin: 0 6px 0 7px; }
.pct { width: 19px; height: 14px; border: 1px solid #777; text-align: center; line-height: 12px; margin-right: 1px; }
.body { height: 594px; flex: none; display: flex; }
.left { width: 313px; display: flex; flex-direction: column; background: #fff; border-right: 1px solid #ddd; }
.phead { height: 14px; flex: none; display: flex; align-items: center; padding: 0 1px 0 3px; background: linear-gradient(#c0d0e0, #d6e2ef); }
.phead span { flex: 1; padding-top: 1px; }
.phead > svg { width: 7px; height: 7px; margin-right: 5px; }
.phead b { width: 8px; height: 8px; background: #c75050; display: block; }
.phead b svg { width: 8px; height: 8px; }
.phead b path { stroke: #fff; fill: none; }
.treebox { height: 284px; display: flex; flex: none; }
.tree { flex: 1; overflow: hidden; padding-top: 2px; letter-spacing: -.28px; }
.tr { height: 12px; display: flex; align-items: center; padding-left: 16px; position: relative; }
.tr.root { padding-left: 4px; }
.stem { position: absolute; left: 7px; top: 0; width: 1px; height: 12px; background: repeating-linear-gradient(#888 0 1px, #fff 1px 2px); }
.stem.two { left: 20px; }
.hide { display: none; }
.pm { width: 7px; height: 7px; position: relative; top: 1px; }
.tr:not(.root) .pm { margin-left: 1px; }
.dash { width: 4px; height: 1px; background: #aaa; }
.ni { width: 10px; height: 9px; margin-right: 3px; }
.root .ni { width: 11px; height: 11px; }
.first .ni { height: 9px; width: 9px; margin: 0 5px 1px 0; }
.tr > span { line-height: 12px; }
.tr .sel { background: #eee; }
.vs { width: 10px; background: #f0f0f0; display: flex; flex-direction: column; flex: none; }
.vs svg { width: 9px; height: 12px; }
.vs div { background: #cacaca; }
.tv { width: 10px; }
.tv div { height: 248px; margin-top: 1px; flex: none; }
.tv svg:last-child { margin-top: auto; }
.p2 { margin-top: 2px; }
.ptabs { height: 22px; flex: none; display: flex; align-items: center; background: #f7f7f7; padding-top: 1px; }
.ptabs div { width: 23px; height: 15px; display: flex; align-items: center; justify-content: center; border-right: 1px solid #bbb; }
.ptabs .act { background: #f2f2f2; border-right-color: #777; }
.ptabs svg { width: 11px; height: 11px; }
.pbox { height: 209px; flex: none; display: flex; border: 1px solid #aaa; border-right-color: #ddd; margin: 0 2px; padding-left: 1px; border-bottom: 0; }
.plist { flex: 1; overflow: hidden; letter-spacing: -.25px; }
.ph, .pchk, .psec, .pr { border-bottom: 1px dashed #c4c4c4; padding-left: 3px; }
.ph { height: 14px; line-height: 14px; background: #f0f0f0; }
.ph, .psec, .pr > b, .desc b { font-weight: 700; font-size: 8px; letter-spacing: 0; }
.pchk { height: 12.500px; display: flex; align-items: center; }
.pchk i, .pr i { width: 9px; height: 9px; border: 1px solid #777; border-right-color: #ddd; border-bottom-color: #ddd; background: #fff; margin-right: 6px; flex: none; }
.psec { height: 9.500px; line-height: 9.500px; color: #0a78d6; }
.pr { height: 12.600px; display: flex; }
.pr > span { width: 62px; overflow: hidden; line-height: 12.500px; border-right: 2px solid #d4d4d4; flex: none; }
.pr > b { flex: 1; padding-left: 2px; display: flex; align-items: center; line-height: 11px; }
.pr i { margin-right: 3px; }
.btn { flex: 1; height: 11px; margin-right: 1px; border: 1px solid #a8a8a8; background: #e1e1e1; text-align: center; font-weight: 400; font-size: 8.500px; letter-spacing: -.25px; line-height: 9px; }
.pv div { height: 178px; flex: none; }
.pv svg:last-child { margin-top: auto; }
.desc { height: 47px; flex: none; margin: 0 2px; background: #f0f0f0; border: 1px solid #bbb; display: flex; flex-direction: column; padding: 2px; line-height: 10.500px; letter-spacing: -.25px; }
.ed { width: 948px; margin-left: 3px; border: 1px solid #777; border-width: 1px 0 0 1px; display: flex; flex-direction: column; }
.edrow { height: 582px; flex: none; display: flex; }
.sheet { flex: 1; background: linear-gradient(#efefef 20%, #fdfdfd 80%, #fff); overflow: hidden; font-family: "DejaVu Sans Condensed", "DejaVu Sans", sans-serif; font-stretch: condensed; letter-spacing: 0; }
.ohead { height: 21px; display: flex; width: 682px; border-bottom: 1px solid #b0b0b0; border-right: 1px solid #b8b8b8; }
.all { width: 200px; background: #f0f0f0; border-right: 1px solid #999; display: flex; flex-direction: column; align-items: center; line-height: 9px; padding-top: 2px; font-size: 8px; letter-spacing: .15px; }
.objs { display: flex; padding-left: 2px; }
.objs div { width: 20px; border-right: 1px solid #c4c4c4; display: flex; align-items: center; justify-content: center; background: #f4f4f4; }
.objs svg { width: 16px; height: 16px; }
.er { display: flex; width: 682px; }
.strip { height: 4px; padding-left: 8px; }
.num { width: 19px; flex: none; display: flex; align-items: center; justify-content: center; background: #f0f0f0; border-right: 1px solid #999; border-bottom: 1px solid #b0b0b0; font-size: 8px; line-height: 10px; padding-top: 2px; }
.d1 { padding-left: 8px; }
.d2 { padding-left: 16px; }
.com .txt { flex: 1; background: #fff; border: 1px solid #222; border-left: 0; padding: 4px 0 0 1px; font-size: 8px; line-height: 10px; letter-spacing: .18px; margin: 0 0 0 1px; }
.com.soft .txt { border-top-color: #777; border-bottom: 2px solid #999; }
.grp { background: #dedede; background-clip: content-box; }
.grp .num { background: #dedede; }
.grp .txt { flex: 1; border: 1px solid #a8a8a8; border-width: 1px 1px 0 0; font-size: 13px; line-height: 20px; padding-left: 7px; }
.grp.off { background-color: #f0f0f0; color: #8d8d8d; }
.grp.off .num { background: #f0f0f0; }
.grp.off .txt, .off .num, .off .cond { border-color: #dcdcdc; }
.cond { width: 173px; flex: none; background: #f0f0f0; border-right: 1px solid #999; border-bottom: 1px solid #b0b0b0; padding: 1px 0 0 5px; display: flex; flex-direction: column; justify-content: center; font-size: 8px; }
.d2 .cond { width: 165px; }
.ln { display: flex; align-items: center; gap: 3px; line-height: 12px; }
.dot { width: 2.500px; height: 2.500px; border-radius: 50%; background: #222; margin-right: 4.500px; margin-left: 1px; }
.green .ln { color: #14962a; }
.oi { width: 16px; height: 16px; background: #fff; border: 1px solid #aaa; margin: -1px 0; }
.neg { color: #d22; margin-right: 3px; }
.cells { width: 480px; margin-left: 2px; border-bottom: 1px solid #b8b8b8; display: grid; grid-template-columns: repeat(24, 20px); background: repeating-linear-gradient(90deg, #fff 0 19px, #c8c8c8 19px 20px, #e4ebf7 20px 39px, #c8c8c8 39px 40px); }
.cells div { display: flex; align-items: center; justify-content: center; padding-top: 1px; }
.cells svg { width: 14px; height: 14px; }
.tall .cells svg { width: 18px; height: 17px; }
.last .num, .last .cond { border-top: 1px solid #999; }
.ev.off .num, .ev.off .cond { background: #f9f9f9; color: #8f8f8f; }
.ev.off .ln { opacity: .9; }
.ev.off .oi { opacity: .5; }
.ev.off .dot { background: #777; }
.ev.off.green .ln { color: #8bc98f; }
.ev.off .neg { color: #e07878; }
.ev.off .cells { border-color: #ddd; background: repeating-linear-gradient(90deg, #fff 0 19px, #e4e4e4 19px 20px, #f2f6fc 20px 39px, #e4e4e4 39px 40px); }
.ev.off .cells svg { opacity: .45; }
.ev-vs { padding-top: 4px; }
.ev-vs div { height: 319px; margin-top: 46px; flex: none; }
.ev-vs svg:last-child { margin-top: auto; }
.hs { height: 11px; flex: none; display: flex; align-items: center; background: #f0f0f0; }
.hs svg { width: 9px; height: 9px; }
.split { width: 4px; height: 11px; border-right: 1px solid #666; background: #fff; margin-right: 2px; }
.hs div { width: 151px; height: 10px; background: #cacaca; margin-right: auto; margin-left: 1px; }
.hs .size { margin-left: 3px; }
.rdock { margin-left: 2px; width: 14px; height: 73px; margin-top: 3px; background: #f0f0f0; border: 1px solid #ccc; border-right: 0; }
.rdock span { writing-mode: vertical-rl; font-size: 8px; line-height: 12px; display: block; padding-top: 1px; letter-spacing: -.05px; }
.tabs { height: 17px; flex: none; padding: 2px 0 0 2px; display: flex; }
.tabs div { height: 14px; width: 15px; background: #f0f0f0; border: 1px solid #c4c4c4; border-left: 0; display: flex; align-items: center; justify-content: center; }
.tabs .w { width: 57px; color: #777; justify-content: flex-start; padding-left: 2px; gap: 6px; letter-spacing: -.2px; }
.tabs svg { width: 9px; height: 9px; }
.tabs .w svg { width: 11px; height: 11px; }
.status { height: 14px; flex: none; background: #f0f0f0; border-top: 1px solid #ddd; display: flex; align-items: center; padding-left: 1017px; color: #777; letter-spacing: -.28px; }
.status div { height: 12px; border-right: 1px solid #d0d0d0; display: flex; align-items: center; flex: none; padding-left: 2px; }
.status svg { width: 8px; height: 8px; margin-right: 3px; }
.s1 { width: 47px; } .s1 svg { margin-right: 4px !important; } .s2 { width: 47px; } .s3 { width: 14px; } .s4 { width: 55px; } .s4 svg { margin-right: 4px !important; } .s5 { width: 47px; } .s6 { width: 15px; }
.s7 { width: 17px; overflow: hidden; } .s8 { width: 22px; color: #222; border: 0 !important; }
.task { flex: 1; display: flex; color: #fff; background: linear-gradient(90deg, #141823 0, #1f2633 262px, #38242b 420px, #2b2a24 560px, #1e2b2b 640px, #232424 800px, #3c211b 1000px, #26262b 1070px, #1b2a31 1150px, #1f232b); }
.start { width: 32px; display: flex; align-items: center; justify-content: center; }
.start svg { width: 12px; height: 12px; }
.find { width: 229px; background: #333; border: 1px solid #454545; display: flex; align-items: center; color: #ccc; font-size: 9.700px; padding-left: 6px; gap: 8px; letter-spacing: -.2px; }
.find svg { width: 12px; height: 12px; }
.app { width: 32.800px; display: flex; align-items: center; justify-content: center; position: relative; }
.app svg { width: 16px; height: 16px; }
.a-circle svg, .a-tasks svg { width: 11px; height: 11px; }
.on::after, .app.act::after, .alert::after { content: ""; position: absolute; left: 3px; right: 3px; bottom: 0; height: 2px; background: #76b9ed; }
.app.alert { background: #b4651f; }
.app.alert::after { left: 0; right: 0; background: #ff7d0a; }
.app.act { background: #5c5550; }
.app.act::after { left: 0; right: 0; }
.alert svg { width: 13px; height: 13px; }
.tray { margin-left: auto; display: flex; align-items: center; }
.tray > svg { width: 9px; height: 9px; margin-right: 6px; }
.tray .cloud, .tray .sync, .tray .net { width: 11px; height: 11px; margin-right: 5px; }
.tray .mute { width: 10px; height: 10px; margin-right: 6px; }
.time { width: 40px; text-align: center; display: flex; flex-direction: column; line-height: 12px; letter-spacing: -.35px; }
.ntf { width: 32px; margin-left: 5px; position: relative; display: flex; padding-left: 4px; }
.ntf svg { width: 12px; height: 12px; }
.ntf b { position: absolute; left: 9px; top: 5px; width: 9px; height: 9px; border-radius: 50%; background: #333b40; border: 1px solid #aaa; font-size: 7px; line-height: 7px; text-align: center; }
</style>
